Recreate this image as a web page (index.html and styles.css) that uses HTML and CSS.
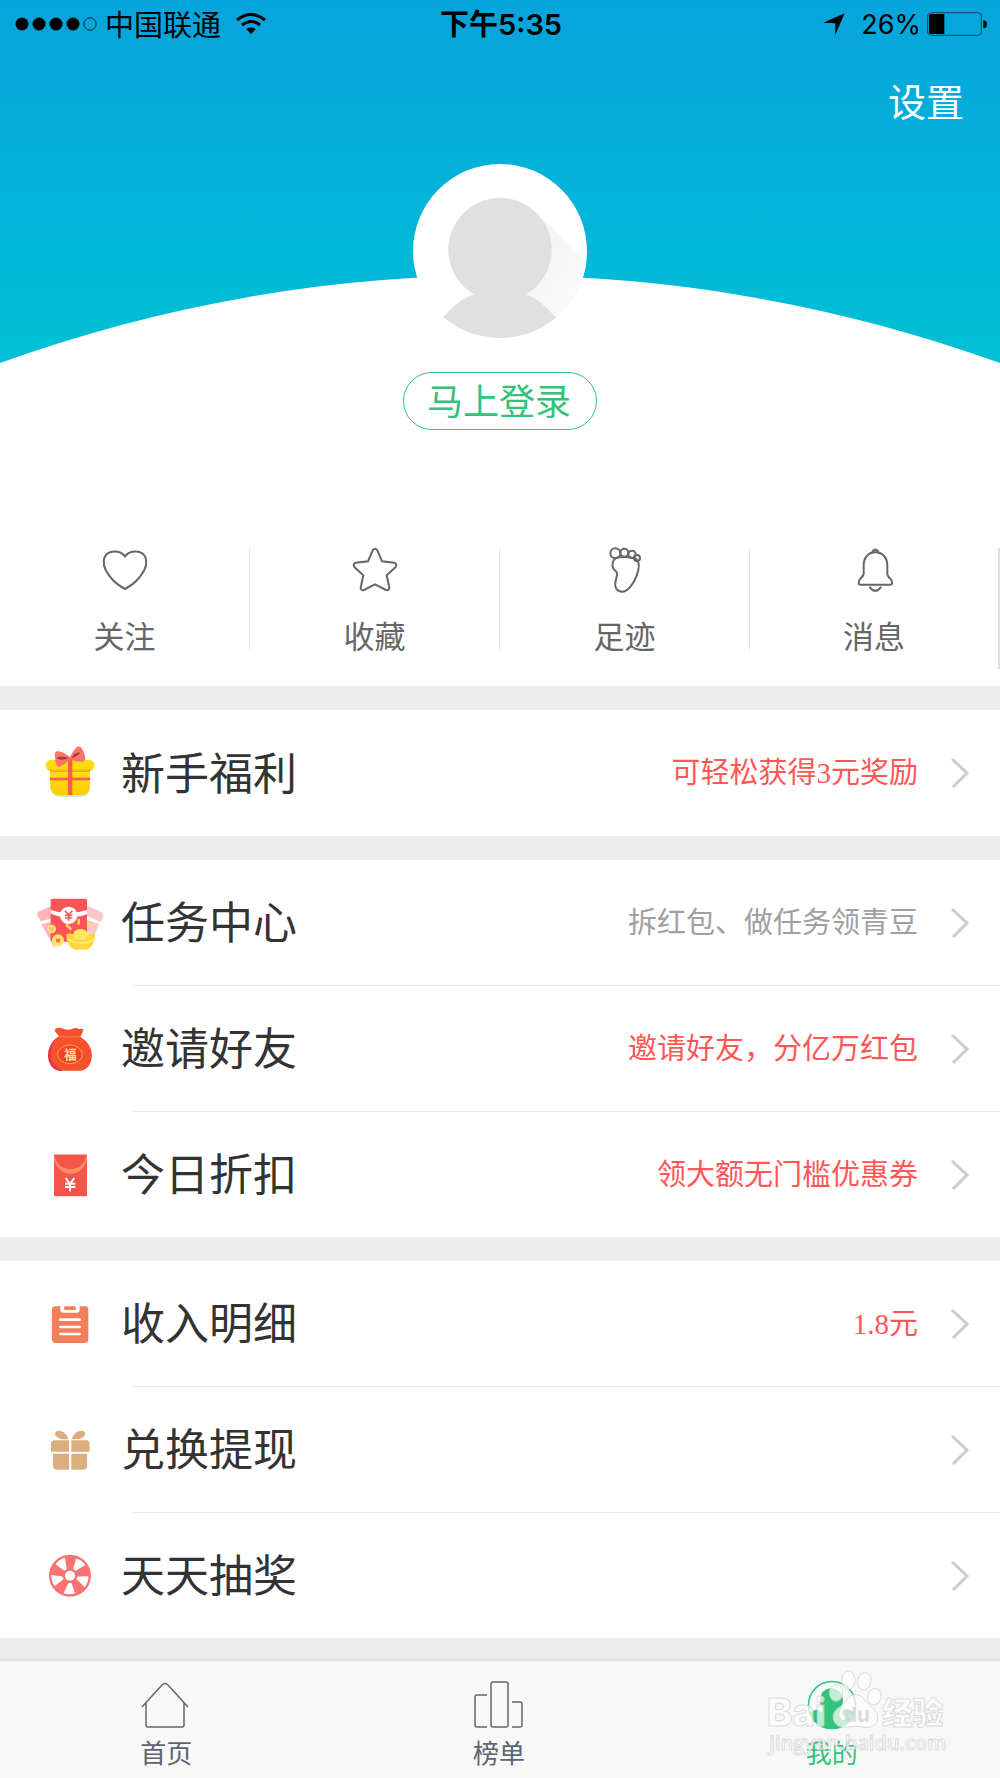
FILE: index.html
```html
<!DOCTYPE html>
<html lang="zh-CN">
<head>
<meta charset="utf-8">
<meta name="viewport" content="width=device-width, initial-scale=1">
<title>我的</title>
<link rel="stylesheet" href="styles.css">
</head>
<body>
<div class="page">
  <header class="hero">
    <svg class="hero-backdrop" viewBox="0 0 1000 363" preserveAspectRatio="none" aria-hidden="true">
      <defs><linearGradient id="sky" x1="0" y1="0" x2="0" y2="1"><stop offset="0" stop-color="#06a4dc"/><stop offset="1" stop-color="#00c0d5"/></linearGradient></defs>
      <path fill="url(#sky)" d="M0 0H1000V363A1470 1470 0 0 0 0 363Z"/>
    </svg>
    <div class="hero-content">
      <div class="status">
        <div class="status-side">
          <svg width="84" height="14" viewBox="0 0 84 14" aria-hidden="true"><circle cx="7" cy="7" r="6.5"/><circle cx="24" cy="7" r="6.5"/><circle cx="41" cy="7" r="6.5"/><circle cx="58" cy="7" r="6.5"/><circle cx="75" cy="7" r="6.2" fill="none" stroke="#000" stroke-width=".8"/></svg>
          <span class="carrier">中国联通</span>
          <svg class="wifi" width="30" height="22" viewBox="0 0 90 66" aria-hidden="true"><g fill="none" stroke="#000" stroke-width="9"><path d="M3 21Q45-12 87 21"/><path d="M18 36Q45 15 72 36"/></g><path d="M31 48Q45 38 59 48L45 64Z"/></svg>
        </div>
        <span class="time">下午5:35</span>
        <div class="status-side status-right">
          <svg width="22" height="22" viewBox="0 0 66 66" aria-hidden="true"><path d="M65 1 37 65V31L1 29Z"/></svg>
          <span class="percent">26%</span>
          <svg width="60" height="24" viewBox="0 0 180 72" aria-hidden="true"><rect x="2" y="2" width="161" height="68" rx="10" fill="none" stroke="#04465e" stroke-width="3"/><path d="M12 6h40v60H12a6 6 0 0 1-6-6V12a6 6 0 0 1 6-6ZM169 25a11 12 0 0 1 0 24Z"/></svg>
        </div>
      </div>
      <nav class="topnav"><a href="#settings">设置</a></nav>
      <div class="profile">
        <svg class="avatar" viewBox="0 0 522 522" role="img" aria-label="头像">
          <defs>
            <clipPath id="disc"><circle cx="261" cy="261" r="261"/></clipPath>
            <linearGradient id="cast" x1="0" y1="0" x2="1" y2="1"><stop offset="0" stop-color="#f1f1f1"/><stop offset="1" stop-color="#fdfdfd"/></linearGradient>
          </defs>
          <circle cx="261" cy="261" r="261" fill="#fff"/>
          <g clip-path="url(#disc)">
            <path fill="url(#cast)" d="M366 142 540 312 460 510 300 400Z"/>
            <path fill="#e0e0e0" d="M60 500C110 430 150 400 186 391Q180 387 174 380H348Q342 387 336 391C372 400 400 430 430 462V522H60Z"/>
            <circle cx="261" cy="257" r="155" fill="#e0e0e0"/>
          </g>
        </svg>
        <button class="login" type="button">马上登录</button>
      </div>
    </div>
  </header>

  <nav class="quick">
    <a href="#follow"><svg viewBox="300 84 150 132" aria-hidden="true"><path d="M375 109C360 91 335 92 323 100C309 110 308 133 317 150C329 173 350 194 375 207C400 194 421 173 433 150C442 133 441 110 427 100C415 92 390 91 375 109Z"/></svg><span>关注</span></a>
    <a href="#favorites"><svg viewBox="1050 84 150 132" aria-hidden="true"><path d="M1118 91Q1125 82 1132 91L1146 124L1183 128Q1192 132 1187 141L1160 166L1168 203Q1167 213 1158 210L1125 193L1092 210Q1083 213 1082 203L1090 166L1063 141Q1058 132 1067 128L1104 124Z"/></svg><span>收藏</span></a>
    <a href="#history"><svg viewBox="300 84 150 132" aria-hidden="true"><circle cx="346" cy="100" r="15"/><circle cx="373" cy="98" r="12"/><circle cx="396" cy="103" r="11"/><circle cx="411" cy="114" r="9"/><path d="M350 113C335 121 333 143 346 152C353 158 352 164 348 178C341 204 351 215 367 215C383 215 402 190 410 167C418 145 418 125 409 117C400 112 366 109 350 113Z"/></svg><span>足迹</span></a>
    <a href="#messages"><svg viewBox="1050 84 150 132" aria-hidden="true"><path d="M1118 99Q1129 78 1140 99M1129 97C1106 97 1094 115 1094 137V162Q1093 168 1084 176Q1079 181 1079 190Q1079 194 1085 194H1174Q1180 194 1179 187Q1179 181 1174 176Q1165 168 1165 162V137C1165 115 1152 97 1129 97ZM1113 202Q1129 223 1145 202"/></svg><span>消息</span></a>
  </nav>

  <main class="menu">
    <section class="group">
      <a class="row" href="#newbie">
        <svg class="icon" viewBox="45 69 210 180" aria-hidden="true">
          <defs><linearGradient id="gold" x1="0" y1="0" x2="0" y2="1"><stop offset="0" stop-color="#ffe01d"/><stop offset="1" stop-color="#ffcd00"/></linearGradient></defs>
          <path d="M92 150H210V200Q208 231 180 231H124Q94 231 92 200Z" fill="#ddd"/>
          <path d="M90 140H210V200Q208 225 182 225H120Q92 225 90 200Z" fill="url(#gold)"/>
          <path d="M90 154H210" stroke="#e9b300" stroke-width="4"/>
          <rect x="77" y="119" width="146" height="34" rx="17" fill="#ffd910"/><path d="M80 143Q86 153 96 153H206Q216 153 220 143Q216 148 206 148H94Q86 148 80 143Z" fill="#f7bd00"/>
          <path d="M144 115H157V225H144ZM90 173H210V181H90Z" fill="#ff5a4e"/>
          <path d="M150 112Q125 90 110 94Q101 97 106 115Q105 136 116 141Q126 141 150 116Q160 126 187 125Q200 122 194 105Q187 79 175 79Q164 83 150 112Z" fill="#fb7468"/>
          <path d="M110 114Q122 107 147 114Q122 124 110 114ZM153 115Q164 97 181 97Q176 108 153 115Z" fill="#a83c34"/>
        </svg>
        <span class="title">新手福利</span><span class="note">可轻松获得3元奖励</span>
        <svg class="chevron" viewBox="0 0 20 32" aria-hidden="true"><path d="M2 2 17 16 3 30"/></svg>
      </a>
    </section>

    <section class="group">
      <a class="row" href="#tasks">
        <svg class="icon" viewBox="45 517 210 180" aria-hidden="true">
          <path d="M100 552 54 574Q49 578 52 584L62 602 92 594ZM64 611 92 604 118 672 102 678Z" fill="#ffb5b5"/><path d="M200 554 248 576Q252 580 250 588L242 604 200 586ZM200 597 238 610 214 665 190 650Z" fill="#ffc7c9"/>
          <rect x="92" y="534" width="109" height="129" rx="5" fill="#ff5457"/>
          <path d="M92 568Q118 577 146 577T201 568V580Q180 590 146 590T92 578Z" fill="#fff"/><circle cx="146" cy="584" r="26" fill="#fff"/>
          <path d="M135 570 146 583 157 570M146 583V600M135 584H157M135 592H157" fill="none" stroke="#ff5457" stroke-width="5"/>
          <path d="M138 611 154 627M176 595V612M214 608 202 620" stroke="#ffe05f" stroke-width="7"/>
          <circle cx="95" cy="625" r="13" fill="#ffe477"/><path d="M90 619V627Q95 635 100 627V619M95 619V626" fill="none" stroke="#ffaa73" stroke-width="3"/>
          <circle cx="114" cy="659" r="18" fill="#ffe363"/><path d="M108 654H120V665H108Z" fill="#ff6d57"/>
          <path d="M138 641Q148 636 160 641Q163 626 181 626T204 641Q218 636 226 641Q222 680 202 687H162Q142 678 138 641Z" fill="#ffd83c"/><path d="M160 642Q163 626 181 626T204 642Q201 657 181 657T160 642Z" fill="#ffe95e"/><path d="M141 655Q182 680 223 655" fill="none" stroke="#ffe978" stroke-width="5"/>
        </svg>
        <span class="title">任务中心</span><span class="note note-muted">拆红包、做任务领青豆</span>
        <svg class="chevron" viewBox="0 0 20 32" aria-hidden="true"><path d="M2 2 17 16 3 30"/></svg>
      </a>
      <a class="row" href="#invite">
        <svg class="icon" viewBox="45 85 210 180" aria-hidden="true">
          <path d="M117 136Q111 130 105 122Q103 114 112 112Q120 109 130 114Q145 120 158 114Q166 110 178 115L190 115Q188 130 181 138Q216 160 216 195Q214 232 184 240H116Q86 232 84 195Q85 157 117 136Z" fill="#f4512c"/>
          <path d="M117 136Q85 157 84 195Q86 232 116 240H128Q92 225 92 188Q92 155 117 136Z" fill="#e8324a"/>
          <path d="M119 137Q150 141 181 138M183 147 187 154" fill="none" stroke="#ff9950" stroke-width="2"/>
          <ellipse cx="150" cy="191" rx="37" ry="28" fill="#ee4424" stroke="#ffb567" stroke-width="2.5"/>
          <text x="151" y="205" text-anchor="middle" class="icon-glyph">福</text>
        </svg>
        <span class="title">邀请好友</span><span class="note">邀请好友，分亿万红包</span>
        <svg class="chevron" viewBox="0 0 20 32" aria-hidden="true"><path d="M2 2 17 16 3 30"/></svg>
      </a>
      <a class="row" href="#discount">
        <svg class="icon" viewBox="45 463 210 180" aria-hidden="true">
          <rect x="102" y="492" width="99" height="125" rx="4" fill="#f35749"/>
          <path d="M102 492H201V501C193 565 110 565 102 501Z" fill="#ff8f62"/><path d="M103 492H200C190 550 112 550 103 492Z" fill="#f45548"/>
          <path d="M137 562 150 580 163 562M150 580V602M135 579H166M135 589H166" fill="none" stroke="#fff" stroke-width="6"/>
        </svg>
        <span class="title">今日折扣</span><span class="note">领大额无门槛优惠券</span>
        <svg class="chevron" viewBox="0 0 20 32" aria-hidden="true"><path d="M2 2 17 16 3 30"/></svg>
      </a>
    </section>

    <section class="group">
      <a class="row" href="#income">
        <svg class="icon" viewBox="45 40 210 180" aria-hidden="true">
          <path d="M106 77H121V89Q121 96 128 96H172Q179 96 179 89V77H195Q205 77 205 87V176Q205 187 195 187H106Q96 187 96 176V87Q96 77 106 77Z" fill="#f27f59"/><rect x="132" y="77" width="36" height="11" rx="5" fill="#f27f59"/>
          <path d="M121 117H179M121 139H179M121 160H179" stroke="#fff" stroke-width="8" stroke-linecap="round"/>
        </svg>
        <span class="title">收入明细</span><span class="note">1.8元</span>
        <svg class="chevron" viewBox="0 0 20 32" aria-hidden="true"><path d="M2 2 17 16 3 30"/></svg>
      </a>
      <a class="row" href="#withdraw">
        <svg class="icon" viewBox="45 418 210 180" aria-hidden="true">
          <path d="M147 479H102Q93 480 93 490V513H147ZM154 479H199Q209 480 209 490V513H154ZM99 519H147V567H110Q99 567 99 556ZM154 519H201V556Q201 567 191 567H154ZM145 476H126Q104 470 105 457Q109 448 123 451Q140 457 145 476ZM155 476H175Q197 470 196 457Q191 448 178 451Q160 457 155 476Z" fill="#dcae7f"/>
        </svg>
        <span class="title">兑换提现</span><span class="note"></span>
        <svg class="chevron" viewBox="0 0 20 32" aria-hidden="true"><path d="M2 2 17 16 3 30"/></svg>
      </a>
      <a class="row" href="#lottery">
        <svg class="icon" viewBox="45 796 210 180" aria-hidden="true">
          <circle cx="150" cy="885" r="63" fill="#f77374"/><circle cx="150" cy="885" r="15" fill="#fff"/>
          <g fill="#fff"><path id="slot" d="M145 908 131 938Q150 944 165 938L155 908Q150 905 145 908Z"/><use href="#slot" transform="rotate(72 150 885)"/><use href="#slot" transform="rotate(144 150 885)"/><use href="#slot" transform="rotate(216 150 885)"/><use href="#slot" transform="rotate(288 150 885)"/></g>
        </svg>
        <span class="title">天天抽奖</span><span class="note"></span>
        <svg class="chevron" viewBox="0 0 20 32" aria-hidden="true"><path d="M2 2 17 16 3 30"/></svg>
      </a>
    </section>
  </main>

  <nav class="tabs">
    <a href="#home"><svg viewBox="0 0 50 50" aria-hidden="true"><path d="M1 27 21 5Q24 2 27 5L47 27M5 23V45Q5 47 7 47H41Q43 47 43 45V23"/></svg><span>首页</span></a>
    <a href="#rank"><svg viewBox="0 0 50 50" aria-hidden="true"><rect x="17" y="2" width="17" height="45" rx="2"/><path d="M13 15H3Q1 15 1 17V45Q1 47 3 47H13M38 22H46Q48 22 48 24V45Q48 47 46 47H38"/></svg><span>榜单</span></a>
    <a class="active" href="#me"><svg viewBox="0 0 50 50" aria-hidden="true"><defs><clipPath id="me-disc"><circle cx="25" cy="25" r="24"/></clipPath></defs><g clip-path="url(#me-disc)"><path class="solid" d="M24 8Q35 9 36 20Q36 26 33 31Q31 37 36 40Q40 40 38 36Q33 33 36 30Q40 27 50 34V50H0V33L8 30Q13 29 14 33L16 29Q13 26 13 20Q14 9 24 8Z"/></g><circle cx="25" cy="25" r="23.5"/></svg><span>我的</span></a>
    <svg class="watermark" viewBox="180 75 570 285" aria-hidden="true">
      <g class="wm-ink">
        <ellipse cx="445" cy="121" rx="20" ry="28"/><ellipse cx="493" cy="124" rx="20" ry="26" transform="rotate(12 493 124)"/><ellipse cx="408" cy="159" rx="20" ry="25"/><ellipse cx="523" cy="170" rx="20" ry="25" transform="rotate(15 523 170)"/>
        <path d="M466 164C440 164 440 190 414 204C388 222 399 263 432 262Q466 256 500 262C532 264 545 228 519 204C492 186 492 164 466 164Z"/>
        <text class="wm-latin" x="200" y="259">Bai</text>
        <text class="wm-cjk" x="546" y="251">经验</text>
        <text class="wm-url" x="208" y="330">jingyan.baidu.com</text>
      </g>
      <text class="wm-du" x="432" y="247">du</text>
    </svg>
  </nav>
</div>
</body>
</html>
```

FILE: styles.css
```css
* { box-sizing: border-box; }

body {
  margin: 0;
  background: #ededed;
  color: #333;
  font-family: "Noto Sans CJK SC", sans-serif;
}

a { color: inherit; text-decoration: none; }
svg { display: block; flex: none; }

.page {
  display: flex;
  flex-direction: column;
  min-height: 100vh;
}

/* Header */
.hero { display: grid; background: #fff; }
.hero-backdrop { grid-area: 1 / 1; width: 100%; height: 363px; }
.hero-content { grid-area: 1 / 1; position: relative; }

.status {
  display: grid;
  grid-template-columns: 1fr auto 1fr;
  align-items: center;
  height: 48px;
  padding: 0 13px 0 15px;
  color: #000;
  line-height: 40px;
}
.status-side { display: flex; align-items: center; }
.status-right { justify-content: flex-end; }
.carrier { margin-left: 6px; padding-bottom: 2px; font-size: 29px; }
.wifi { margin-left: 15px; }
.time { padding-top: 2px; font: 600 29px/40px Inter, "Noto Sans CJK SC", sans-serif; }
.percent { margin: 0 6px 0 16px; padding-top: 2px; font: 27px/40px Inter, sans-serif; }

.topnav {
  display: flex;
  align-items: center;
  justify-content: flex-end;
  height: 106px;
  padding: 0 36px 2px 0;
  color: #fff;
  font-size: 38px;
  line-height: 44px;
}

.profile {
  display: flex;
  flex-direction: column;
  align-items: center;
  gap: 34px;
  padding: 10px 0 118px;
}
.avatar { width: 174px; height: 174px; }
.login {
  width: 194px;
  height: 58px;
  padding: 0 2px 4px 0;
  border: 1px solid #32c27c;
  border-radius: 29px;
  background: #fff;
  color: #32c27c;
  font: 36px/52px "Noto Sans CJK SC", sans-serif;
}

/* Shortcuts */
.quick {
  display: grid;
  grid-template-columns: repeat(4, 1fr);
  align-items: start;
  padding-bottom: 17px;
  background: #fff;
  color: #666;
  font-size: 31px;
  line-height: 40px;
}
.quick a {
  display: flex;
  flex-direction: column;
  align-items: center;
  gap: 23px;
  height: 102px;
  border-right: 1px solid #e6e6e6;
}
.quick a:last-child { height: 121px; border-right: 2px solid #e0e0e0; }
.quick svg {
  width: 50px;
  height: 44px;
  overflow: visible;
  fill: none;
  stroke: #666;
  stroke-width: 6;
  stroke-linecap: round;
}

/* Menu */
.menu {
  display: flex;
  flex: 1;
  flex-direction: column;
  gap: 24px;
  padding: 24px 0 21px;
  background: #ededed;
}
.group { background: #fff; }
.row {
  display: flex;
  align-items: center;
  height: 126px;
  padding: 0 30px 0 35px;
}
.row:not(:last-child) {
  border-bottom: 1px solid;
  border-image: linear-gradient(to right, transparent 133px, #e8e8e8 133px) 1;
}
.row + .row:last-child { height: 125px; }
.icon { width: 70px; height: 60px; margin-right: 16px; }
.icon-glyph { fill: #ffe0a0; font: bold 38px "Noto Sans CJK SC", sans-serif; }
.title { flex: 1; padding-bottom: 5px; font-size: 44px; line-height: 64px; }
.note {
  color: #ff5656;
  font: 29px/40px "Liberation Serif", "Noto Sans CJK SC", serif;
}
.note-muted { color: #a0a0a0; }
.chevron {
  width: 20px;
  height: 32px;
  margin-left: 32px;
  fill: none;
  stroke: #ccc;
  stroke-width: 3;
}

/* Tab bar */
.tabs {
  position: relative;
  display: grid;
  grid-template-columns: repeat(3, 1fr);
  padding-right: 2px;
  border-top: 2px solid #e2e2e2;
  background: #f8f8f8;
  color: #5d6470;
  font-size: 26px;
  line-height: 36px;
}
.tabs a {
  display: flex;
  flex-direction: column;
  align-items: center;
  gap: 4px;
  padding: 19px 0 8px;
}
.tabs a svg {
  width: 50px;
  height: 50px;
  fill: none;
  stroke: #666;
  stroke-width: 1.5;
}
.tabs .active { color: #30c47c; }
.tabs .active svg { stroke: #30c47c; }
.tabs .active .solid { fill: #30c47c; stroke: none; }

.watermark {
  position: absolute;
  top: 4px;
  right: 50px;
  width: 190px;
  height: 95px;
  pointer-events: none;
}
.wm-ink {
  fill: #fff;
  fill-opacity: .7;
  stroke: #ccc;
  stroke-opacity: .7;
  stroke-width: 3;
}
.wm-latin { font: 800 116px Inter, sans-serif; }
.wm-cjk { font: 900 92px "Noto Sans CJK SC", sans-serif; }
.wm-url { font: 600 60px "Open Sans", sans-serif; }
.wm-du { fill: #d4d4d4; fill-opacity: .8; font: 700 62px Inter, sans-serif; }
```
